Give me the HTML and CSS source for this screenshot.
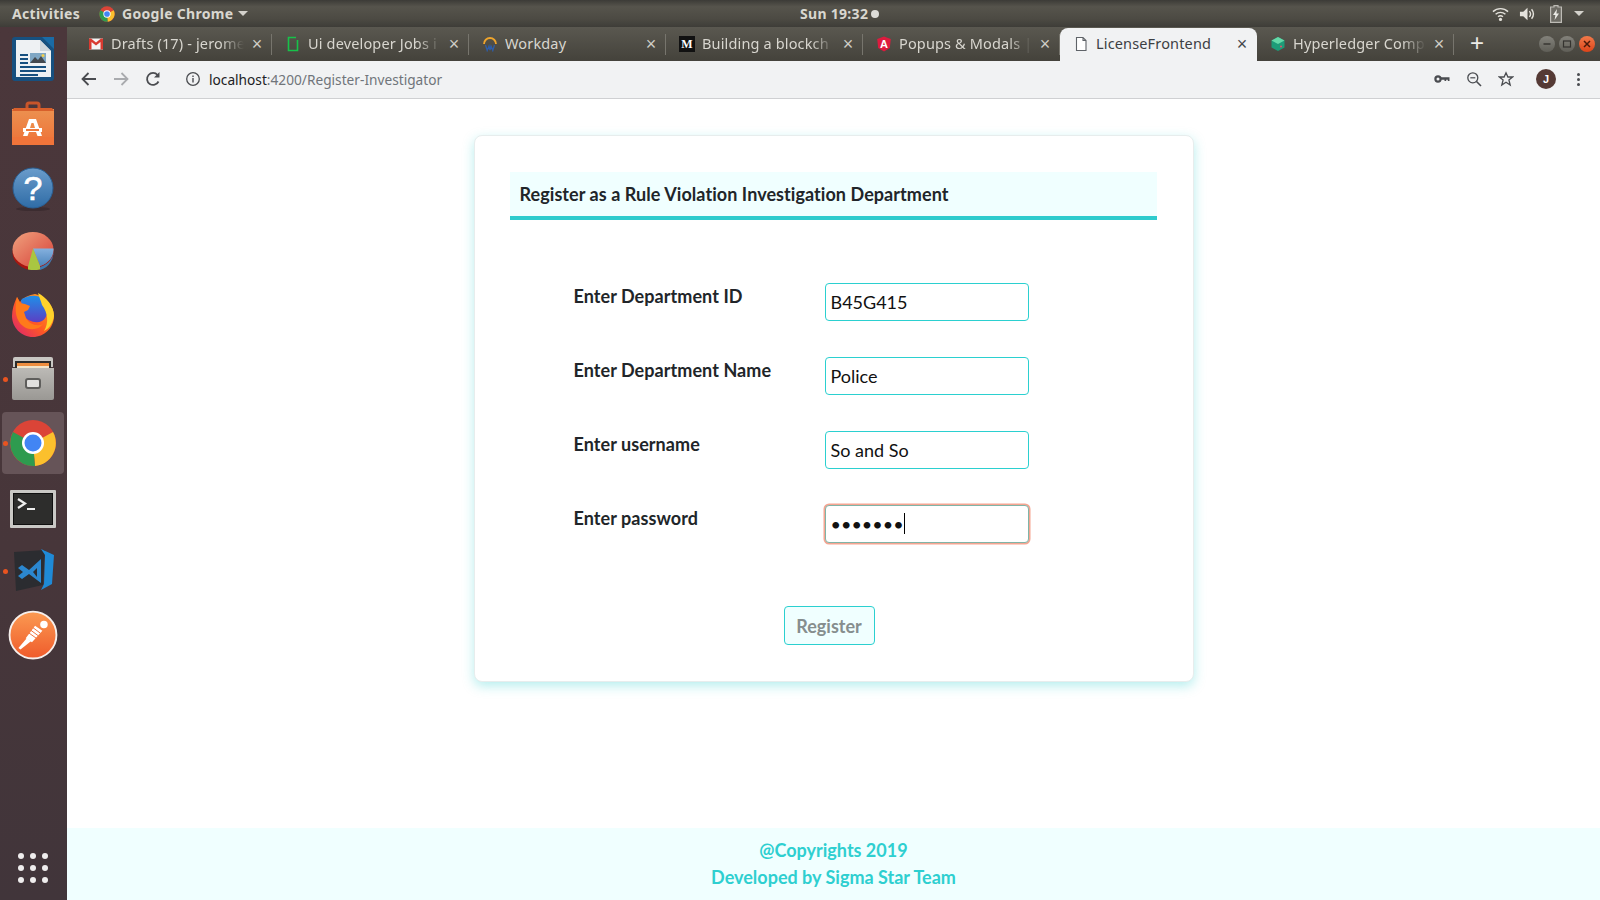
FILE: index.html
```html
<!DOCTYPE html>
<html lang="en">
<head>
<meta charset="utf-8">
<title>LicenseFrontend</title>
<link rel="stylesheet" href="styles.css">
</head>
<body>
<header class="topbar">
  <div class="top-left">
    <span class="top-label">Activities</span>
    <span class="app-menu">
      <svg class="i16" viewBox="0 0 48 48"><circle cx="24" cy="24" r="23" fill="#db4437"/><path d="M24 24 44 13A23 23 0 0 1 26 47Z" fill="#fbc02d"/><path d="M24 24 26 47A23 23 0 0 1 4 13Z" fill="#2e9b4f"/><circle cx="24" cy="24" r="11" fill="#fff"/><circle cx="24" cy="24" r="8.5" fill="#4285f4"/></svg>
      <span class="top-label">Google Chrome</span>
      <span class="caret caret-app"></span>
    </span>
  </div>
  <div class="clock"><span class="top-label">Sun 19:32</span><span class="clock-dot"></span></div>
  <div class="tray">
    <svg class="tray-wifi" viewBox="0 0 18 16"><path d="M1 5.5C5.6 1.2 12.4 1.2 17 5.5M3.8 8.3C6.8 5.6 11.2 5.6 14.2 8.3M6.4 10.9C8 9.6 10 9.6 11.6 10.9" fill="none" stroke="#e4e2dc" stroke-width="1.5"/><circle cx="9" cy="13.8" r="1.7" fill="#e4e2dc"/></svg>
    <svg class="tray-vol" viewBox="0 0 18 16"><path d="M1 5.5H4.5L9 1.5V14.5L4.5 10.5H1Z" fill="#e4e2dc"/><path d="M11 5C12.5 6.8 12.5 9.2 11 11M13.3 3C15.7 6 15.7 10 13.3 13" fill="none" stroke="#e4e2dc" stroke-width="1.5"/></svg>
    <svg class="tray-bat" viewBox="0 0 12 18"><path d="M4 .6H8V2H11.4V17.4H.6V2H4Z" fill="#6d6b64" stroke="#bdbbb5" stroke-width="1.2"/><path d="M7 4 3 10H5.4L4.6 15 9 8.4H6.4Z" fill="#ecebe6"/></svg>
    <span class="caret"></span>
  </div>
</header>

<div class="desktop">
  <nav class="dock">
    <div class="dock-item">
      <svg class="dock-icon" viewBox="0 0 48 48"><rect x="3" y="2" width="42" height="44" rx="3" fill="#17507f"/><path d="M7 5H31L42 16V42H7Z" fill="#eef1f3"/><path d="M31 5 42 16H31Z" fill="#cfd6dc"/><path d="M33 2H45V14Z" fill="#1a6ba6"/><path d="M11 19H19V21H11ZM11 23H19V25H11ZM11 27H19V29H11ZM11 31H37V33H11ZM11 35H37V37H11ZM11 39H29V41H11Z" fill="#17507f"/><rect x="21" y="18" width="16" height="10" fill="#7fa7c4"/><path d="M21 28 26 22 29 25 32 21 37 28Z" fill="#44494e"/><circle cx="34" cy="20.5" r="1.5" fill="#f2cf4a"/></svg>
    </div>
    <div class="dock-item">
      <svg class="dock-icon" viewBox="0 0 48 48"><defs><linearGradient id="sw" x1="0" y1="0" x2="0" y2="1"><stop offset="0" stop-color="#ec9150"/><stop offset="1" stop-color="#ee7238"/></linearGradient></defs><path d="M18 13V6Q18 4 20 4H28Q30 4 30 6V13" fill="none" stroke="#c9552a" stroke-width="3"/><path d="M3 10H45V46H3Z" fill="url(#sw)"/><path d="M3 38H45V46H3Z" fill="#f0743a"/><path d="M5 9H43L45 12H3Z" fill="#d85f2b"/><path d="M20 20H27L33 37H28.5L27 33H20L18.5 37H14Z" fill="#fff"/><path d="M22.5 24H24.5L26 29H21Z" fill="#ee8a48"/><rect x="14" y="29" width="19" height="4" fill="#fff"/><rect x="17" y="30" width="13" height="2" fill="#ee7a3e"/></svg>
    </div>
    <div class="dock-item">
      <svg class="dock-icon" viewBox="0 0 48 48"><defs><linearGradient id="hg" x1="0" y1="0" x2="0" y2="1"><stop offset="0" stop-color="#6a9ccb"/><stop offset="1" stop-color="#2f6ca6"/></linearGradient></defs><ellipse cx="24" cy="46" rx="17" ry="2" fill="#3c2c30"/><circle cx="24" cy="25" r="20" fill="url(#hg)" stroke="#2a5f92"/><text class="help-mark" x="24" y="37" text-anchor="middle">?</text></svg>
    </div>
    <div class="dock-item">
      <svg class="dock-icon" viewBox="0 0 48 48"><defs><linearGradient id="pr" x1="0" y1="0" x2="1" y2="1"><stop offset="0" stop-color="#f0a27e"/><stop offset="1" stop-color="#d63f37"/></linearGradient><linearGradient id="pb" x1="0" y1="0" x2="0" y2="1"><stop offset="0" stop-color="#85b0de"/><stop offset="1" stop-color="#4d86bd"/></linearGradient></defs><ellipse cx="24" cy="25.5" rx="20.5" ry="17.5" fill="#a8160f"/><ellipse cx="24" cy="22.5" rx="20.5" ry="17.5" fill="url(#pr)"/><path d="M24 21.5H44.4A20.5 17.5 0 0 1 31 40L31 43Q38 41 41 36 44.5 31 44.5 25.5V21.5Z" fill="#3f78ad"/><path d="M24 21.5H44.5A20.5 17.5 0 0 1 31 39Z" fill="url(#pb)"/><path d="M24 21.5 31 39V42.5Q25 43.5 19 42.5L19 39.5Z" fill="#a9c641"/></svg>
    </div>
    <div class="dock-item">
      <svg class="dock-icon" viewBox="0 0 48 48"><defs><linearGradient id="fx" x1="0" y1="1" x2="1" y2="0"><stop offset="0" stop-color="#d81f78"/><stop offset=".45" stop-color="#ff5a22"/><stop offset="1" stop-color="#ffb21f"/></linearGradient><linearGradient id="fb" x1="0" y1="0" x2="0" y2="1"><stop offset="0" stop-color="#1f8fe8"/><stop offset="1" stop-color="#5b3fc4"/></linearGradient></defs><path d="M8 6 11 11C15 6 20 4 26 3 35 5 45 14 45 25 45 37 35 46 24 46 12 46 3 36 3 25 3 19 5 12 8 6Z" fill="url(#fx)"/><path d="M12 9C17 5 28 2 36 9 41 14 39 27 33 30 27 33 18 30 14 24Z" fill="url(#fb)"/><path d="M29 2C37 6 45 15 45 25 44 32 40 38 35 40 40 32 39 22 33 14 32 10 30 6 29 2Z" fill="#ffd22b"/><path d="M8 6 11 12 16 13 21 15 19 19 15 21 17 27C20 33 28 36 34 33 30 39 20 40 14 35 7 30 5 20 8 6Z" fill="#ff7a1a"/></svg>
    </div>
    <div class="dock-item">
      <span class="run-dot"></span>
      <svg class="dock-icon" viewBox="0 0 48 48"><defs><linearGradient id="fc" x1="0" y1="0" x2="0" y2="1"><stop offset="0" stop-color="#bcbab6"/><stop offset="1" stop-color="#9a9894"/></linearGradient></defs><path d="M4 4Q4 2 6 2H42Q44 2 44 4V12H4Z" fill="#c9c7c3"/><rect x="6" y="6" width="36" height="8" fill="#2c2b2a"/><rect x="8" y="8" width="32" height="3" fill="#ee8d3f"/><rect x="8" y="11" width="32" height="3" fill="#f3e4c9"/><path d="M3 13H45V43Q45 45 43 45H5Q3 45 3 43Z" fill="url(#fc)"/><rect x="17" y="24" width="14" height="9" rx="2" fill="#e2e1df" stroke="#5f5e5c" stroke-width="2"/></svg>
    </div>
    <div class="dock-item dock-active">
      <span class="run-dot"></span>
      <svg class="dock-icon" viewBox="0 0 48 48"><circle cx="24" cy="24" r="23" fill="#db4437"/><path d="M24 24 44 13A23 23 0 0 1 26 47Z" fill="#fbc02d"/><path d="M24 24 26 47A23 23 0 0 1 4 13Z" fill="#2e9b4f"/><circle cx="24" cy="24" r="11" fill="#fff"/><circle cx="24" cy="24" r="8.5" fill="#4285f4"/></svg>
    </div>
    <div class="dock-item">
      <svg class="dock-icon" viewBox="0 0 48 48"><rect x="1" y="7" width="46" height="38" rx="1" fill="#c9c8c5"/><rect x="4" y="10" width="40" height="32" fill="#0f0f0f"/><rect x="5" y="11" width="38" height="30" fill="#2d2d2c"/><path d="M9 16 16 20.5 9 25" fill="none" stroke="#ededed" stroke-width="2.2"/><rect x="18" y="25" width="8" height="2" fill="#ededed"/></svg>
    </div>
    <div class="dock-item">
      <span class="run-dot"></span>
      <svg class="dock-icon" viewBox="0 0 48 48"><path d="M5 5 36 3 34 38 7 44Z" fill="#2b2c30"/><path d="M32 2 45 8 43 37 32 43 35 37 36 8Z" fill="#1f8ad6"/><path d="M9 21 13 18 20 23 32 12V36L20 27 13 32 9 29 14 25Z" fill="#2b87cf"/><path d="M24 25 28 21V30Z" fill="#2b2c30"/></svg>
    </div>
    <div class="dock-item">
      <svg class="dock-icon dock-icon-lg" viewBox="0 0 48 48"><defs><linearGradient id="pm" x1="0" y1="0" x2="0" y2="1"><stop offset="0" stop-color="#fb9a52"/><stop offset="1" stop-color="#ef5b2b"/></linearGradient></defs><circle cx="24" cy="24" r="22.5" fill="url(#pm)" stroke="#f5efec" stroke-width="1.8"/><path d="M26 15 33 20 23 31 17 27Z" fill="#fff"/><path d="M18 27 22 30 12 38 10 36.5Z" fill="#fff"/><path d="M24 17 31 22.2M22 19.5 29 24.7M20 22 27 27" stroke="#ef6a35" stroke-width=".9"/><circle cx="34.5" cy="14" r="3.6" fill="#fff"/></svg>
    </div>
    <div class="dock-grid">
      <span></span><span></span><span></span><span></span><span></span><span></span><span></span><span></span><span></span>
    </div>
  </nav>

  <div class="browser">
    <div class="tabstrip">
      <div class="tab">
        <svg class="i16" viewBox="0 0 16 16"><rect x="1" y="2.5" width="14" height="11" fill="#f4f4f4"/><path d="M1 2.5H3L8 6.5 13 2.5H15V13.5H12.5V6L8 9.5 3.5 6V13.5H1Z" fill="#d93a30"/></svg>
        <span class="tab-title">Drafts (17) - jerome</span><span class="tab-x">×</span>
      </div>
      <div class="tab">
        <svg class="i16" viewBox="0 0 16 16"><path d="M11 1.5H3.5V14.5H12.5V4" fill="none" stroke="#17c24a" stroke-width="1.6"/></svg>
        <span class="tab-title">Ui developer Jobs i</span><span class="tab-x">×</span>
      </div>
      <div class="tab">
        <svg class="i16" viewBox="0 0 16 16"><path d="M2 8A6 6 0 0 1 14 8" fill="none" stroke="#efa52c" stroke-width="1.8"/><path d="M3.5 9 5.2 14.5 7 10 8 14 9 10 10.8 14.5 12.5 9" fill="none" stroke="#2e5da8" stroke-width="1.3"/></svg>
        <span class="tab-title tab-plain">Workday</span><span class="tab-x">×</span>
      </div>
      <div class="tab">
        <span class="fav-m">M</span>
        <span class="tab-title">Building a blockch</span><span class="tab-x">×</span>
      </div>
      <div class="tab">
        <svg class="i16" viewBox="0 0 16 16"><path d="M8 .5 14.8 3 13.8 12 8 15.5 2.2 12 1.2 3Z" fill="#dd1b3e"/><text class="fav-a" x="8" y="11.5" text-anchor="middle">A</text></svg>
        <span class="tab-title">Popups &amp; Modals |</span><span class="tab-x">×</span>
      </div>
      <div class="tab tab-active">
        <svg class="i16" viewBox="0 0 16 16"><path d="M3.5 1.5H10L13 4.5V14.5H3.5Z M10 1.5V4.5H13" fill="#fff" stroke="#5f6368" stroke-width="1.1"/></svg>
        <span class="tab-title tab-plain">LicenseFrontend</span><span class="tab-x">×</span>
      </div>
      <div class="tab">
        <svg class="i16" viewBox="0 0 16 16"><path d="M8 1 14.5 4.5V11.5L8 15 1.5 11.5V4.5Z" fill="#1d9c78"/><path d="M8 1 14.5 4.5 8 8 1.5 4.5Z" fill="#64d9a8"/><circle cx="11" cy="10.5" r="1" fill="#e8506a"/></svg>
        <span class="tab-title">Hyperledger Comp</span><span class="tab-x">×</span>
      </div>
      <span class="tab-new">+</span>
      <div class="win-btns">
        <span class="win-btn"><svg viewBox="0 0 16 16"><path d="M4.5 8H11.5" stroke="#34332f" stroke-width="1.4"/></svg></span>
        <span class="win-btn"><svg viewBox="0 0 16 16"><rect x="4.5" y="5" width="7" height="6" fill="none" stroke="#34332f" stroke-width="1.2"/></svg></span>
        <span class="win-btn win-close"><svg viewBox="0 0 16 16"><path d="M5 5 11 11M11 5 5 11" stroke="#4a1a0a" stroke-width="1.5"/></svg></span>
      </div>
    </div>

    <div class="toolbar">
      <span class="tool"><svg class="i18" viewBox="0 0 18 18"><path d="M16 9H3M8.5 3 2.5 9 8.5 15" fill="none" stroke="#4a4c50" stroke-width="1.8"/></svg></span>
      <span class="tool"><svg class="i18" viewBox="0 0 18 18"><path d="M2 9H15M9.5 3 15.5 9 9.5 15" fill="none" stroke="#a9abae" stroke-width="1.8"/></svg></span>
      <span class="tool"><svg class="i18" viewBox="0 0 18 18"><path d="M14.5 11.5A6 6 0 1 1 13.6 5" fill="none" stroke="#4a4c50" stroke-width="1.8"/><path d="M15.5 2V7.5H10Z" fill="#4a4c50"/></svg></span>
      <div class="url">
        <svg class="url-info" viewBox="0 0 16 16"><circle cx="8" cy="8" r="6.3" fill="none" stroke="#4a4c50" stroke-width="1.3"/><path d="M8 7V11.5M8 4.5V6" stroke="#4a4c50" stroke-width="1.4"/></svg>
        <span class="url-host">localhost</span><span class="url-path">:4200/Register-Investigator</span>
      </div>
      <div class="tool-right">
        <span class="tool"><svg class="i16" viewBox="0 0 16 16"><circle cx="4" cy="8" r="2.6" fill="none" stroke="#4a4c50" stroke-width="2.2"/><path d="M6.5 6.3H15.5V10H13.8V8.8H12.2V10H10.5V8.8H6.5Z" fill="#4a4c50"/></svg></span>
        <span class="tool"><svg class="i16" viewBox="0 0 16 16"><circle cx="6.8" cy="6.8" r="5" fill="none" stroke="#4a4c50" stroke-width="1.3"/><path d="M10.5 10.5 15 15" stroke="#4a4c50" stroke-width="1.6"/><path d="M4.3 6.8H9.3" stroke="#4a4c50" stroke-width="1.2"/></svg></span>
        <span class="tool"><svg class="i16" viewBox="0 0 16 16"><path d="M8 1.8 9.9 6H14.6L10.9 9 12.2 14 8 11.2 3.8 14 5.1 9 1.4 6H6.1Z" fill="none" stroke="#4a4c50" stroke-width="1.3"/></svg></span>
        <span class="tool tool-avatar"><span class="avatar">J</span></span>
        <span class="tool"><span class="kebab"><span></span><span></span><span></span></span></span>
      </div>
    </div>

    <main class="page">
      <section class="card">
        <h1 class="card-title">Register as a Rule Violation Investigation Department</h1>
        <form class="form">
          <label class="form-label" for="dept-id">Enter Department ID</label>
          <input class="form-input" id="dept-id" type="text" value="B45G415">
          <label class="form-label" for="dept-name">Enter Department Name</label>
          <input class="form-input" id="dept-name" type="text" value="Police">
          <label class="form-label" for="user">Enter username</label>
          <input class="form-input" id="user" type="text" value="So and So">
          <label class="form-label" for="pass">Enter password</label>
          <div class="field-focus">
            <input class="form-input form-input-focus" id="pass" type="password" value="1234567">
            <span class="text-caret"></span>
          </div>
        </form>
        <button class="submit" type="button">Register</button>
      </section>
      <footer class="footer">
        <p class="footer-line">@Copyrights 2019</p>
        <p class="footer-line">Developed by Sigma Star Team</p>
      </footer>
    </main>
  </div>
</div>
</body>
</html>
```

FILE: styles.css
```css
* { box-sizing: border-box; }
html, body { margin: 0; height: 100%; }
body {
  width: 1600px;
  height: 900px;
  overflow: hidden;
  display: flex;
  flex-direction: column;
  font-family: "Lato", "Liberation Sans", sans-serif;
  background: #fff;
}
svg { display: block; flex: none; }
.i16 { width: 16px; height: 16px; }
.i18 { width: 18px; height: 18px; }

/* GNOME top bar */
.topbar {
  height: 27px;
  flex: none;
  display: flex;
  align-items: center;
  position: relative;
  padding: 0 12px;
  background: linear-gradient(#3c3b37, #56544c 25%, #4c4a43 70%, #3e3d38);
}
.top-label {
  font-family: "Noto Sans", sans-serif;
  font-size: 14px;
  font-weight: 700;
  letter-spacing: .3px;
  color: #d9d7d0;
  white-space: nowrap;
}
.top-left { display: flex; align-items: center; gap: 19px; }
.app-menu { display: flex; align-items: center; gap: 7px; }
.caret {
  width: 0;
  height: 0;
  border-left: 5px solid transparent;
  border-right: 5px solid transparent;
  border-top: 5px solid #d4d2cc;
}
.caret-app { margin-left: -2px; }
.clock {
  position: absolute;
  left: 800px;
  top: 0;
  height: 27px;
  display: flex;
  align-items: center;
  gap: 3px;
}
.clock-dot { width: 8px; height: 8px; border-radius: 50%; background: #dcdbd7; }
.tray { margin-left: auto; display: flex; align-items: center; padding-right: 4px; }
.tray-wifi { width: 17px; height: 16px; margin-right: 10px; }
.tray-vol { width: 17px; height: 16px; margin-right: 14px; }
.tray-bat { width: 12px; height: 18px; margin-right: 12px; }

.desktop { flex: 1; display: flex; min-height: 0; }

/* Dock */
.dock {
  width: 67px;
  flex: none;
  display: flex;
  flex-direction: column;
  position: relative;
  background: linear-gradient(#4b373b, #47363a 60%, #41353a);
}
.dock-item {
  height: 64px;
  flex: none;
  display: flex;
  align-items: center;
  justify-content: center;
  padding-right: 1px;
  position: relative;
}
.dock-active::before {
  content: "";
  position: absolute;
  left: 2px;
  top: 1px;
  width: 62px;
  height: 62px;
  border-radius: 4px;
  background: #665458;
}
.dock-icon { width: 48px; height: 48px; position: relative; }
.dock-icon-lg { width: 50px; height: 50px; }
.help-mark {
  font-family: "Liberation Sans", sans-serif;
  font-size: 34px;
  font-weight: 400;
  fill: #fff;
  stroke: #fff;
  stroke-width: .6px;
}
.run-dot {
  position: absolute;
  left: 3px;
  top: 30px;
  width: 5px;
  height: 5px;
  border-radius: 50%;
  background: #e95420;
  z-index: 1;
}
.dock-grid {
  margin-top: auto;
  margin-bottom: 17px;
  margin-left: 18px;
  width: 30px;
  display: grid;
  grid-template-columns: repeat(3, 6px);
  gap: 6px;
}
.dock-grid span { width: 6px; height: 6px; border-radius: 50%; background: #efeded; }

/* Browser */
.browser { flex: 1; display: flex; flex-direction: column; min-width: 0; }
.tabstrip {
  height: 34px;
  flex: none;
  display: flex;
  align-items: stretch;
  padding: 1px 0 0 8px;
  background: linear-gradient(#5a5850, #44423b);
  position: relative;
}
.tab {
  width: 197px;
  flex: none;
  display: flex;
  align-items: center;
  gap: 7px;
  padding: 0 9px 2px 13px;
  position: relative;
}
.tab::after {
  content: "";
  position: absolute;
  right: 0;
  top: 6px;
  bottom: 6px;
  width: 1px;
  background: #77756d;
}
.tab-title {
  flex: 1;
  min-width: 0;
  padding-bottom: 2px;
  overflow: hidden;
  white-space: nowrap;
  font-family: "Noto Sans", sans-serif;
  font-size: 14.5px;
  letter-spacing: .15px;
  color: #d8d6cf;
  -webkit-mask-image: linear-gradient(to right, #000 82%, transparent 100%);
  mask-image: linear-gradient(to right, #000 82%, transparent 100%);
}
.tab-plain { -webkit-mask-image: none; mask-image: none; }
.tab-x {
  width: 12px;
  text-align: center;
  font-family: "Liberation Sans", sans-serif;
  font-size: 18px;
  line-height: 18px;
  color: #cfcdc6;
}
.fav-m {
  width: 16px;
  height: 16px;
  flex: none;
  background: #111;
  color: #fff;
  font-family: "Liberation Serif", serif;
  font-weight: 700;
  font-size: 12px;
  line-height: 16px;
  text-align: center;
}
.fav-a { font-family: "Liberation Sans", sans-serif; font-size: 11px; font-weight: 700; fill: #fff; }
.tab-active {
  background: #f1f2f3;
  border-radius: 8px 8px 0 0;
}
.tab-active::after { display: none; }
.tab-active .tab-title { color: #3c4043; }
.tab-active .tab-x { color: #45474a; }
.tab-new {
  width: 46px;
  flex: none;
  text-align: center;
  font-family: "Liberation Sans", sans-serif;
  font-size: 24px;
  line-height: 30px;
  color: #ecebe6;
}
.win-btns {
  position: absolute;
  right: 5px;
  top: 9px;
  display: flex;
  gap: 4px;
}
.win-btn {
  width: 16px;
  height: 16px;
  border-radius: 50%;
  background: linear-gradient(#83827b, #5f5e57);
}
.win-close { background: linear-gradient(#f27a4a, #dc4419); }

.toolbar {
  height: 38px;
  flex: none;
  display: flex;
  align-items: center;
  padding: 0 6px 1px 6px;
  background: #f1f2f3;
  border-bottom: 1px solid #cfd0d2;
}
.tool {
  width: 32px;
  height: 32px;
  flex: none;
  display: flex;
  align-items: center;
  justify-content: center;
}
.url {
  display: flex;
  align-items: center;
  margin-left: 16px;
  font-family: "Noto Sans", sans-serif;
  font-size: 13.7px;
}
.url-info { width: 16px; height: 16px; margin-right: 8px; }
.url-host { color: #202124; }
.url-path { color: #70757a; }
.tool-right { margin-left: auto; display: flex; align-items: center; }
.tool-avatar { margin: 0 0 0 8px; }
.avatar {
  width: 20px;
  height: 20px;
  border-radius: 50%;
  background: #553a35;
  color: #fff;
  font-family: "Liberation Sans", sans-serif;
  font-size: 11px;
  font-weight: 700;
  line-height: 20px;
  text-align: center;
}
.kebab { display: flex; flex-direction: column; gap: 2px; }
.kebab span { width: 3px; height: 3px; border-radius: 50%; background: #4a4c50; }

/* Page */
.page {
  flex: 1;
  min-height: 0;
  display: flex;
  flex-direction: column;
  align-items: center;
  padding-top: 36px;
}
.card {
  width: 720px;
  height: 547px;
  padding: 36px 36px 36px 35px;
  background: #fff;
  border: 1px solid #e7eded;
  border-radius: 8px;
  box-shadow: 0 4px 12px rgba(43, 205, 205, .35);
}
.card-title {
  margin: 0;
  height: 48px;
  padding: 0 10px;
  font-size: 18px;
  font-weight: 700;
  letter-spacing: .06px;
  line-height: 44px;
  color: #212529;
  background: #f0ffff;
  border-bottom: 4px solid #2ecbcd;
}
.form {
  display: grid;
  grid-template-columns: 251px 204px;
  grid-auto-rows: 38px;
  row-gap: 36px;
  margin: 63px 0 0 64px;
}
.form-label {
  font-size: 18px;
  font-weight: 700;
  letter-spacing: .06px;
  line-height: 27px;
  color: #212529;
}
.form-input {
  width: 100%;
  height: 38px;
  padding: 0 5px;
  font-family: "Lato", sans-serif;
  font-size: 18px;
  color: #111;
  background: #fff;
  border: 1px solid #2bd0d0;
  border-radius: 4px;
  outline: none;
}
.form-input-focus {
  border-color: #7fb5a8;
  box-shadow: 0 0 0 1.5px #f5a592;
}
.field-focus { position: relative; }
.text-caret {
  position: absolute;
  left: 79px;
  top: 8px;
  width: 1px;
  height: 21px;
  background: #000;
}
.submit {
  display: block;
  width: 91px;
  height: 39px;
  margin: 63px 0 0 274px;
  padding: 0;
  font-family: "Lato", sans-serif;
  font-size: 18px;
  font-weight: 700;
  color: #868e8e;
  background: #f0ffff;
  border: 1px solid #2bd0d0;
  border-radius: 4px;
}
.footer {
  margin-top: auto;
  width: 100%;
  height: 72px;
  padding-top: 9px;
  background: #f0ffff;
  text-align: center;
}
.footer-line {
  margin: 0;
  font-size: 18px;
  font-weight: 700;
  line-height: 27px;
  color: #2ecfd0;
}
```
